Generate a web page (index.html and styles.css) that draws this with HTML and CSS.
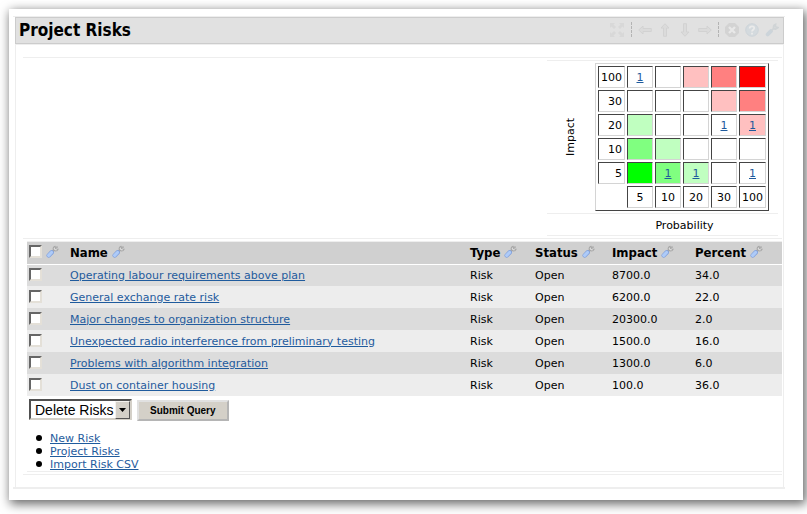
FILE: index.html
```html
<!DOCTYPE html>
<html lang="en">
<head>
<meta charset="utf-8">
<title>Project Risks</title>
<link rel="stylesheet" href="styles.css">
</head>
<body>
<svg class="defs" aria-hidden="true">
  <symbol id="wrench" viewBox="0 0 13 13">
    <path d="M6.500 6.500 L8 5" stroke="#a8a8a8" stroke-width="2.200"/>
    <path d="M9.600 1.300 C7.600 1.300 6.700 3.200 7.500 4.700 C8.400 6.200 11 6.300 12 4.200 L10.300 4 L9.300 3.200 L10.200 2.100 L11.900 2.200" fill="none" stroke="#a8a8a8" stroke-width="1.200"/>
    <path d="M8.300 3 C8.300 4.600 9.500 5 10.800 4.800" fill="none" stroke="#e4e4e4" stroke-width=".8"/>
    <path d="M2.700 10.500 L5.700 7.400" stroke="#7f9fdc" stroke-width="4.400" stroke-linecap="round"/>
    <path d="M2.700 10.400 L5.500 7.500" stroke="#aecbf8" stroke-width="3.200" stroke-linecap="round"/>
  </symbol>
  <symbol id="arrow" viewBox="0 0 14 14">
    <path d="M.7 7 L5 3 V5.500 H13.300 V8.500 H5 V11Z" fill="#dbdbdb" stroke="#d2d2d2"/>
  </symbol>
</svg>
<main class="page">
  <section class="portlet">
    <header class="titlebar">
      <h1>Project Risks</h1>
      <div class="tools">
        <button type="button" aria-label="Maximize"><svg class="wide" viewBox="0 0 16 16"><path d="M1 1H6L4.500 2.500L7 5L5 7L2.500 4.500L1 6ZM15 1V6L13.500 4.500L11 7L9 5L11.500 2.500L10 1ZM1 15V10L2.500 11.500L5 9L7 11L4.500 13.500L6 15ZM15 15H10L11.500 13.500L9 11L11 9L13.500 11.500L15 10Z" fill="#d8d8d8"/></svg></button>
        <span class="divider"></span>
        <button type="button" aria-label="Move left"><svg viewBox="0 0 14 14"><use href="#arrow"/></svg></button>
        <button type="button" aria-label="Move up"><svg class="up" viewBox="0 0 14 14"><use href="#arrow"/></svg></button>
        <button type="button" aria-label="Move down"><svg class="down" viewBox="0 0 14 14"><use href="#arrow"/></svg></button>
        <button type="button" aria-label="Move right"><svg class="right" viewBox="0 0 14 14"><use href="#arrow"/></svg></button>
        <span class="divider"></span>
        <button type="button" aria-label="Close"><svg viewBox="0 0 14 14"><path d="M4 0H10L14 4V10L10 14H4L0 10V4Z" fill="#d3d3d3"/><path d="M4 4L10 10M10 4L4 10" stroke="#e8e8e8" stroke-width="2.400"/></svg></button>
        <button type="button" aria-label="Help"><svg viewBox="0 0 14 14"><circle cx="7" cy="7" r="6.300" fill="#d4dade" stroke="#cdd4d9"/><path d="M4.700 5.500C4.700 2.600 9.400 2.700 9.200 5.300C9.100 6.800 7 6.800 7 8.600M7 9.800V11.500" fill="none" stroke="#ebebeb" stroke-width="1.800"/></svg></button>
        <button type="button" aria-label="Configure"><svg viewBox="0 0 13 13"><path d="M2.500 10.600L5.500 7.500" stroke="#ccd4da" stroke-width="3.600" stroke-linecap="round"/><path d="M6 7L8.500 4.500M9.800 1.200C7.200 2 7.200 5.400 9.800 5.600L12 4.300L9.600 3.500Z" fill="none" stroke="#d0d4d6" stroke-width="1.600"/></svg></button>
      </div>
    </header>
    <div class="content">
      <div class="overview">
        <div class="chart">
          <div class="plot">
            <div class="impact">Impact</div>
            <table class="matrix">
              <tbody>
              <tr><th scope="row">100</th><td><a href="#">1</a></td><td></td><td class="r1"></td><td class="r2"></td><td class="r3"></td></tr>
              <tr><th scope="row">30</th><td></td><td></td><td></td><td class="r1"></td><td class="r2"></td></tr>
              <tr><th scope="row">20</th><td class="g1"></td><td></td><td></td><td><a href="#">1</a></td><td class="r1"><a href="#">1</a></td></tr>
              <tr><th scope="row">10</th><td class="g2"></td><td class="g1"></td><td></td><td></td><td></td></tr>
              <tr><th scope="row">5</th><td class="g3"></td><td class="g2"><a href="#">1</a></td><td class="g1"><a href="#">1</a></td><td></td><td><a href="#">1</a></td></tr>
              <tr><td class="corner"></td><td>5</td><td>10</td><td>20</td><td>30</td><td>100</td></tr>
              </tbody>
            </table>
          </div>
          <div class="probability">Probability</div>
        </div>
      </div>
      <form class="risks">
        <table class="list">
          <colgroup><col class="c-check"><col><col class="c-type"><col class="c-status"><col class="c-impact"><col class="c-percent"></colgroup>
          <thead>
          <tr>
            <th><span class="head"><input type="checkbox" aria-label="Select all"><svg class="wrench"><use href="#wrench"/></svg></span></th>
            <th><span class="head">Name<svg class="wrench"><use href="#wrench"/></svg></span></th>
            <th><span class="head">Type<svg class="wrench"><use href="#wrench"/></svg></span></th>
            <th><span class="head">Status<svg class="wrench"><use href="#wrench"/></svg></span></th>
            <th><span class="head">Impact<svg class="wrench"><use href="#wrench"/></svg></span></th>
            <th><span class="head">Percent<svg class="wrench"><use href="#wrench"/></svg></span></th>
          </tr>
          </thead>
          <tbody>
          <tr><td><input type="checkbox" aria-label="Operating labour requirements above plan"></td><td><a href="#">Operating labour requirements above plan</a></td><td>Risk</td><td>Open</td><td>8700.0</td><td>34.0</td></tr>
          <tr><td><input type="checkbox" aria-label="General exchange rate risk"></td><td><a href="#">General exchange rate risk</a></td><td>Risk</td><td>Open</td><td>6200.0</td><td>22.0</td></tr>
          <tr><td><input type="checkbox" aria-label="Major changes to organization structure"></td><td><a href="#">Major changes to organization structure</a></td><td>Risk</td><td>Open</td><td>20300.0</td><td>2.0</td></tr>
          <tr><td><input type="checkbox" aria-label="Unexpected radio interference from preliminary testing"></td><td><a href="#">Unexpected radio interference from preliminary testing</a></td><td>Risk</td><td>Open</td><td>1500.0</td><td>16.0</td></tr>
          <tr><td><input type="checkbox" aria-label="Problems with algorithm integration"></td><td><a href="#">Problems with algorithm integration</a></td><td>Risk</td><td>Open</td><td>1300.0</td><td>6.0</td></tr>
          <tr><td><input type="checkbox" aria-label="Dust on container housing"></td><td><a href="#">Dust on container housing</a></td><td>Risk</td><td>Open</td><td>100.0</td><td>36.0</td></tr>
          </tbody>
        </table>
        <div class="actions">
          <span class="dropdown">
            <select aria-label="Action"><option>Delete Risks</option></select>
            <span class="drop"><svg viewBox="0 0 7 4"><path d="M0 0H7L3.500 4Z"/></svg></span>
          </span>
          <button type="submit" class="submit">Submit Query</button>
        </div>
        <ul class="links">
          <li><a href="#">New Risk</a></li>
          <li><a href="#">Project Risks</a></li>
          <li><a href="#">Import Risk CSV</a></li>
        </ul>
      </form>
    </div>
  </section>
</main>
</body>
</html>
```
FILE: styles.css
```css
* { box-sizing: border-box; }

body {
  margin: 0;
  padding: 9px 4px 14px 9px;
  background: #fff;
  color: #000;
  font: 11px/13px "DejaVu Sans", Verdana, sans-serif;
}

a { color: #1f5b9d; }

.defs { position: absolute; width: 0; height: 0; }

.page {
  padding: 7px 18px 11px 4px;
  background: #fff;
  box-shadow: 2px 3px 10px 1px rgba(0, 0, 0, .6);
}

.portlet {
  border-top: 1px solid #eee;
  border-bottom: 2px solid #eee;
  padding: 0 1px 0 2px;
}

.titlebar {
  display: flex;
  align-items: center;
  justify-content: space-between;
  height: 27px;
  padding: 0 4px 0 3px;
  border: 1px solid #ccc;
  background: #e1e1e1;
}

h1 {
  margin: 0;
  padding-bottom: 2px;
  font: bold 17px/20px "DejaVu Sans Condensed", Tahoma, sans-serif;
}

.tools { display: flex; align-items: center; gap: 6px; padding-bottom: 2px; }

.tools button {
  display: flex;
  padding: 0;
  border: 0;
  background: none;
}

.tools svg { width: 14px; height: 14px; }
.tools .wide { width: 16px; height: 16px; }
.tools .up { transform: rotate(90deg); }
.tools .down { transform: rotate(-90deg); }
.tools .right { transform: rotate(180deg); }

.divider { height: 15px; border-left: 1px dashed #b4b4b4; }

.content {
  padding: 12px 1px 12px 7px;
  border: solid #eee;
  border-width: 1px 1px 0;
}

.overview {
  display: flex;
  justify-content: flex-end;
  padding: 2px 4px;
  border: solid #eee;
  border-width: 1px 0;
}

.chart { width: 231px; border: solid #eee; border-width: 1px 0; }

.plot {
  display: flex;
  align-items: center;
  justify-content: space-between;
  padding: 2px 9px 2px 17px;
}

.impact { writing-mode: vertical-rl; transform: rotate(180deg); }

.matrix {
  border: 1px solid;
  border-color: #d4d4d4 #444 #444 #d4d4d4;
  border-collapse: separate;
  border-spacing: 2px;
}

.matrix th,
.matrix td {
  width: 26px;
  height: 22px;
  padding: 0 2px;
  border: 1px solid;
  border-color: #444 #d4d4d4 #d4d4d4 #444;
  font-weight: normal;
  text-align: center;
}

.matrix th { width: 27px; text-align: right; }
.matrix .corner { border-color: transparent; }
.matrix .r1 { background: #ffc0c0; }
.matrix .r2 { background: #ff8080; }
.matrix .r3 { background: #f00; }
.matrix .g1 { background: #c0ffc0; }
.matrix .g2 { background: #80ff80; }
.matrix .g3 { background: #0f0; }

.probability {
  padding: 5px 0 3px 44px;
  border-top: 1px solid #eee;
  text-align: center;
}

.risks {
  margin: 2px 0 0 4px;
  border: solid #eee;
  border-width: 1px 0;
}

.content::after { content: ""; display: block; margin-top: 2px; border-top: 1px solid #eee; }

.list { width: 100%; border-collapse: collapse; table-layout: fixed; }
.list th, .list td { height: 22px; padding: 0 2px; text-align: left; }
.list th {
  border-bottom: 1px solid #fff;
  background: #d0d0d0;
  font: bold 13px/16px "DejaVu Sans Condensed", Tahoma, sans-serif;
}
.list tbody tr { background: #ededed; }
.list tbody tr:nth-child(odd) { background: #dcdcdc; }

.c-check { width: 41px; }
.c-type { width: 65px; }
.c-status { width: 77px; }
.c-impact { width: 83px; }
.c-percent { width: 89px; }

.head { display: flex; align-items: center; gap: 4px; }
.wrench { width: 13px; height: 13px; margin-bottom: 2px; }

input[type="checkbox"] {
  display: block;
  width: 13px;
  height: 13px;
  margin: 0 0 2px;
  appearance: none;
  border: 2px solid;
  border-color: #666 #e4e0d8 #e4e0d8 #666;
  background: #fff;
}

.actions { display: flex; gap: 5px; padding: 3px 2px 0; }

.dropdown { position: relative; }

select {
  display: block;
  width: 103px;
  height: 21px;
  padding: 0 15px 0 4px;
  appearance: none;
  border: 2px solid;
  border-color: #505050 #d4d0c8 #d4d0c8 #505050;
  border-radius: 0;
  background: #fff;
  color: #000;
  font: 14px/16px "Liberation Sans", Arial, sans-serif;
}

.drop {
  position: absolute;
  top: 2px;
  right: 2px;
  bottom: 2px;
  display: flex;
  align-items: center;
  justify-content: center;
  width: 15px;
  border: 1px solid;
  border-color: #f4f2ee #555 #555 #f4f2ee;
  background: #d4d0c8;
  pointer-events: none;
}
.drop svg { width: 7px; height: 4px; }

.submit {
  height: 21px;
  margin-top: 1px;
  padding: 0 11px;
  border: 2px solid;
  border-color: #e1e1e1 #b5b5b5 #b5b5b5 #e1e1e1;
  background: #d4d0c8;
  color: #000;
  font: bold 10px/12px "Liberation Sans", Arial, sans-serif;
}

.links { margin: 0; padding: 11px 0 0 9px; list-style: none; }
.links li { display: flex; align-items: center; gap: 8px; }
.links li::before {
  content: "";
  width: 6px;
  height: 6px;
  margin-bottom: 2px;
  border-radius: 50%;
  background: #000;
}
```
